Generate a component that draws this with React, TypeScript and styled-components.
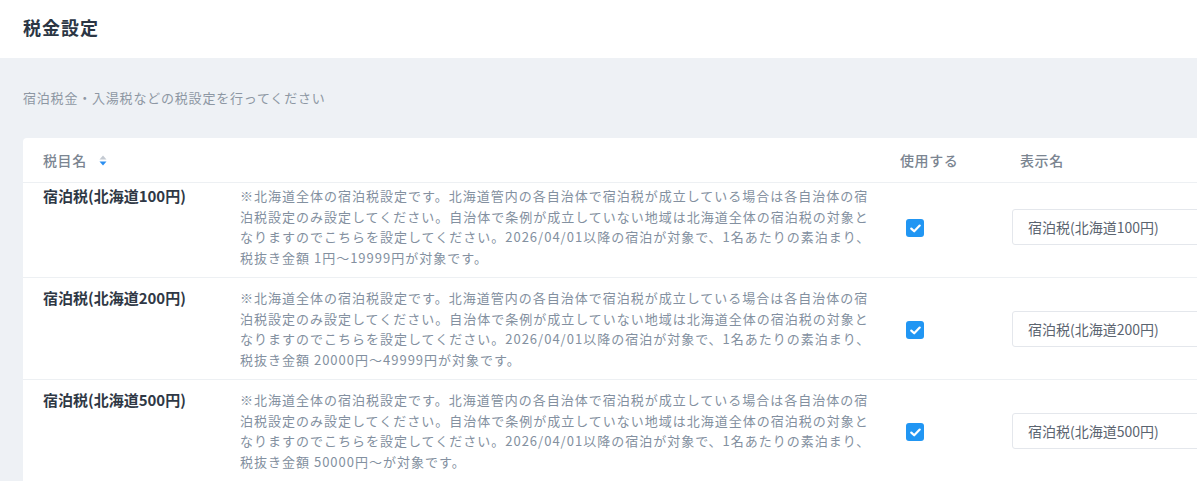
import styled, { createGlobalStyle } from "styled-components";

const GlobalStyle = createGlobalStyle`
  html, body {
    margin: 0;
    padding: 0;
    overflow: hidden;
    background: #eef1f5;
  }
  body {
    font-family: "Noto Sans CJK JP", "Noto Sans", sans-serif;
  }
`;

interface TaxRow {
  id: string;
  name: string;
  range: string;
}

const rows: TaxRow[] = [
  { id: "100", name: "宿泊税(北海道100円)", range: "1円〜19999円が対象です。" },
  { id: "200", name: "宿泊税(北海道200円)", range: "20000円〜49999円が対象です。" },
  { id: "500", name: "宿泊税(北海道500円)", range: "50000円〜が対象です。" },
];

const noteText = (range: string) =>
  "※北海道全体の宿泊税設定です。北海道管内の各自治体で宿泊税が成立している場合は各自治体の宿泊税設定のみ設定してください。自治体で条例が成立していない地域は北海道全体の宿泊税の対象となりますのでこちらを設定してください。2026/04/01以降の宿泊が対象で、1名あたりの素泊まり、税抜き金額 " +
  range;

const Page = styled.div`
  min-height: 481px;
`;

const TopBar = styled.header`
  height: 58px;
  background: #fff;
  display: flex;
  align-items: center;
  padding: 0 23px;
  box-sizing: border-box;
`;

const Title = styled.h1`
  margin: 0 0 4px;
  font-size: 18px;
  font-weight: 700;
  letter-spacing: 1px;
  color: #2b3644;
`;

const Body = styled.main`
  padding: 30px 0 0 23px;
`;

const Lead = styled.p`
  margin: 0 0 30px;
  font-size: 13px;
  line-height: 20px;
  letter-spacing: 0.8px;
  color: #8d97a3;
`;

const Card = styled.section`
  width: 1300px;
  background: #fff;
  border-radius: 4px 0 0 0;
`;

const Grid = styled.div<{ $first?: boolean; $head?: boolean }>`
  display: grid;
  grid-template-columns: 197px 660px 112px 1fr;
  padding: ${(p) => (p.$head ? "0" : p.$first ? "3px 0 9px" : "10px 0 9px")};
  padding-left: 20px;
  height: ${(p) => (p.$head ? "44px" : "auto")};
  align-items: ${(p) => (p.$head ? "center" : "start")};
  border-bottom: 1px solid #edf0f3;
`;

const HeadCell = styled.div<{ $indent?: number }>`
  display: flex;
  align-items: center;
  gap: 12px;
  padding-left: ${(p) => p.$indent ?? 0}px;
  font-size: 14px;
  font-weight: 500;
  letter-spacing: 0.6px;
  color: #7b8591;
`;

const NameCell = styled.div`
  font-size: 15px;
  line-height: 20.5px;
  font-weight: 700;
  color: #2f3845;
`;

const NoteCell = styled.div`
  width: 640px;
  font-size: 13px;
  line-height: 20.5px;
  letter-spacing: 1px;
  color: #8390a0;
`;

const CheckCell = styled.div`
  align-self: center;
  padding: 2px 0 0 6px;
`;

const Check = styled.span`
  display: flex;
  align-items: center;
  justify-content: center;
  width: 18px;
  height: 18px;
  border-radius: 3px;
  background: #2196f3;
`;

const InputCell = styled.div`
  align-self: center;
`;

const NameInput = styled.input`
  box-sizing: border-box;
  width: 260px;
  height: 36px;
  padding: 0 15px;
  border: 1px solid #e4e7ec;
  border-radius: 3px;
  font-family: "Noto Sans CJK JP", sans-serif;
  font-size: 14px;
  color: #5b6470;
  outline: none;
`;

const SortIcon = () => (
  <svg width="8" height="11" viewBox="0 0 8 11">
    <path d="M4 0.5 L7.5 4.5 H0.5 Z" fill="#c4cad2" />
    <path d="M4 10.5 L7.5 6.5 H0.5 Z" fill="#2b8ef0" />
  </svg>
);

const CheckMark = () => (
  <svg width="11" height="9" viewBox="0 0 11 9">
    <path d="M1.3 4.6 L4.2 7.3 L9.7 1.6" fill="none" stroke="#fff" strokeWidth="2.2" strokeLinecap="round" strokeLinejoin="round" />
  </svg>
);

export default function App() {
  return (
    <Page>
      <GlobalStyle />
      <TopBar>
        <Title>税金設定</Title>
      </TopBar>
      <Body>
        <Lead>宿泊税金・入湯税などの税設定を行ってください</Lead>
        <Card>
          <Grid $head>
            <HeadCell>
              税目名
              <SortIcon />
            </HeadCell>
            <div />
            <HeadCell>使用する</HeadCell>
            <HeadCell $indent={8}>表示名</HeadCell>
          </Grid>
          {rows.map((row, i) => (
            <Grid key={row.id} $first={i === 0}>
              <NameCell>{row.name}</NameCell>
              <NoteCell>{noteText(row.range)}</NoteCell>
              <CheckCell>
                <Check>
                  <CheckMark />
                </Check>
              </CheckCell>
              <InputCell>
                <NameInput defaultValue={row.name} />
              </InputCell>
            </Grid>
          ))}
        </Card>
      </Body>
    </Page>
  );
}
